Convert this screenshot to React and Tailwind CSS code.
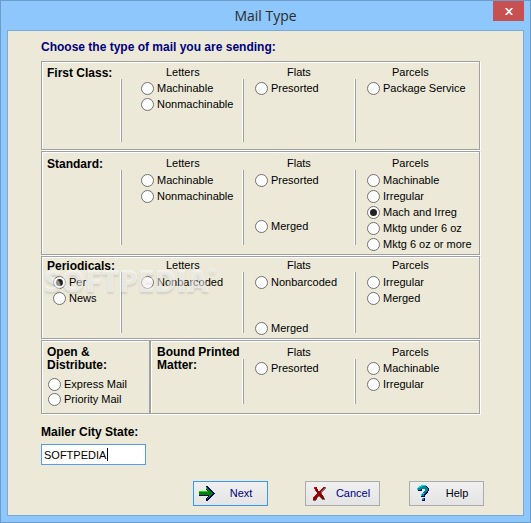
import { useState } from 'react';
import clsx from 'clsx';

function Radio({ label, name, checked, className }) {
  return (
    <label className={clsx('flex h-4 items-center gap-[3px] whitespace-nowrap', className)}>
      <input
        type="radio"
        name={name}
        defaultChecked={checked}
        className="relative m-0 size-[13px] shrink-0 appearance-none rounded-full border border-[#707070] bg-white before:absolute before:inset-[2px] before:hidden before:rounded-full before:bg-[#222] checked:before:block"
      />
      {label}
    </label>
  );
}

function Column({ title, name, options, titleClass, lineClass, bodyClass }) {
  return (
    <div className="flex flex-col">
      <div className={clsx('leading-[14px]', titleClass)}>{title}</div>
      <div className="flex flex-1">
        <div className={clsx('w-[2px] shrink-0 border-l border-white bg-[#a0a0a0]', lineClass)} />
        <div className={bodyClass}>
          {options.map((o) => (
            <Radio key={o.label} name={name} {...o} />
          ))}
        </div>
      </div>
    </div>
  );
}

const box = 'border border-[#a0a0a0] shadow-[1px_1px_0_#fff,inset_1px_1px_0_#fff]';
const heading = 'pl-[5px] text-[12px] font-bold';

const sections = [
  {
    title: 'First Class:',
    name: 'first-class',
    boxClass: 'min-h-[89px] pt-[3px]',
    lineClass: 'mb-[7px]',
    bodyClass: 'pt-px',
    letters: [{ label: 'Machinable' }, { label: 'Nonmachinable' }],
    flats: [{ label: 'Presorted' }],
    parcels: [{ label: 'Package Service' }],
  },
  {
    title: 'Standard:',
    name: 'standard',
    boxClass: 'min-h-[104px] pt-1',
    lineClass: 'mb-[9px]',
    bodyClass: 'pt-[2px]',
    letters: [{ label: 'Machinable' }, { label: 'Nonmachinable' }],
    flats: [{ label: 'Presorted' }, { label: 'Merged', className: 'mt-[30px]' }],
    parcels: [
      { label: 'Machinable' },
      { label: 'Irregular' },
      { label: 'Mach and Irreg', checked: true },
      { label: 'Mktg under 6 oz' },
      { label: 'Mktg 6 oz or more' },
    ],
  },
  {
    title: 'Periodicals:',
    name: 'periodicals',
    boxClass: 'min-h-[83px] pt-px',
    lineClass: 'mb-[5px]',
    bodyClass: 'pt-[2px]',
    own: [{ label: 'Per', checked: true }, { label: 'News' }],
    letters: [{ label: 'Nonbarcoded' }],
    flats: [{ label: 'Nonbarcoded' }, { label: 'Merged', className: 'mt-[30px]' }],
    parcels: [{ label: 'Irregular' }, { label: 'Merged' }],
  },
];

function Section({ title, name, boxClass, lineClass, bodyClass, own = [], letters, flats, parcels }) {
  return (
    <section
      className={clsx(
        'relative grid grid-cols-[minmax(0,78fr)_minmax(0,122fr)_minmax(0,112fr)_minmax(0,125fr)]',
        box,
        boxClass
      )}
    >
      <div>
        <h2 className={clsx(heading, 'leading-4')}>{title}</h2>
        <div className="pl-[11px]">
          {own.map((o) => (
            <Radio key={o.label} name={`${name}-type`} {...o} />
          ))}
        </div>
      </div>
      <Column title="Letters" name={name} options={letters} titleClass="pl-[46px]" lineClass={lineClass} bodyClass={clsx(bodyClass, 'pl-[19px]')} />
      <Column title="Flats" name={name} options={flats} titleClass="pl-[45px]" lineClass={lineClass} bodyClass={clsx(bodyClass, 'pl-[11px]')} />
      <Column title="Parcels" name={name} options={parcels} titleClass="pl-[38px]" lineClass={lineClass} bodyClass={clsx(bodyClass, 'pl-[11px]')} />
      {name === 'periodicals' && (
        <div
          aria-hidden="true"
          className="pointer-events-none absolute top-2 left-[2px] flex font-['Open_Sans',sans-serif] text-[30px] leading-8 font-extrabold text-white/50 [text-shadow:0_2px_2px_rgb(0_0_0/0.1)]"
        >
          SOFTPEDIA<span className="text-[9px] leading-3">®</span>
        </div>
      )}
    </section>
  );
}

function ArrowIcon() {
  return (
    <svg viewBox="0 0 17 16" className="h-4 w-[17px]" shapeRendering="crispEdges">
      <path d="M8 0h2v1h1v1h1v1h1v1h1v1h1v1h1v1h1v1h-1v1h-1v1h-1v1h-1v1h-1v1h-1v1h-1v1H8v-3h1v-1h1v-1H1V5h8V4H8z" fill="#000070" />
      <path d="M1 5h9V4H9V3H8V1h1v1h1v1h1v1h1v1h1v1h1v1h1v1h-1v1h-1v1h-1v1h-1v1h-1v1H9v-1h1v-1h1V9H1z" fill="#008000" />
      <path d="M1 5h9v1H1zM8 1h1v2H8z" fill="#00e000" />
    </svg>
  );
}

function CrossIcon() {
  return (
    <svg viewBox="0 0 14 15" className="h-[15px] w-[14px]" shapeRendering="crispEdges">
      <path d="M11 1h3v2h-1v1h-1v1h-1v1h-1v3h1v1h1v2h1v2h-3v-1H9v-1H8v-1H6v1H5v2H4v1H1v-2h3V9h4V5h2V3h1z" fill="#707070" />
      <path d="M2 1h3v2h1v2h2V4h1V3h1V2h1V1h2v1h-1v1h-1v1h-1v1h-1v1H9v2h1v1h1v2h1v2h-2v-1H9v-1H8v-1H6v1H5v2H4v1H1v-2h1v-1h1V9h1V8h1V6H4V5H3V3H2z" fill="#900000" />
      <path d="M2 1h2v1H2zM2 2h1v1H2zM3 3h1v2H3zM11 1h1v1h-1zM10 2h1v1h-1zM9 3h1v1H9zM8 4h1v1H8zM4 8h1v1H4zM3 9h1v1H3zM2 10h1v1H2zM1 11h1v2H1z" fill="#f00000" />
    </svg>
  );
}

function QuestionIcon() {
  return (
    <svg viewBox="0 0 12 17" className="h-[17px] w-3" shapeRendering="crispEdges">
      <path d="M4 1h6v1h1v1h1v3h-1v2h-1v1H9v1H8v2H4V9h1V8h2V7h1V4H5v2H1V3h2V2h1zM5 13h3v3H5z" fill="#000080" />
      <path d="M3 1h6v1h1v1h1v3h-1v1H9v1H8v1H7v2H4V9h1V8h1V7h1V6h1V4H4v1H1V3h1V2h1zM5 13h2v2H5z" fill="#008888" />
      <path d="M4 0h5v1H4zM2 1h3v1H2zM1 2h2v1H1zM0 3h1v2H0zM5 8h2v1H5zM4 9h1v2H4zM5 13h1v1H5z" fill="#00dddd" />
    </svg>
  );
}

function DialogButton({ icon, children, className }) {
  return (
    <button
      type="button"
      className={clsx('flex h-[25px] w-[75px] items-center border bg-linear-to-b from-[#f0f0f0] to-[#e4e4e4] pl-1', className)}
    >
      <span className="flex w-[17px] shrink-0 justify-center">{icon}</span>
      <span className="flex-1 text-center">{children}</span>
    </button>
  );
}

export default function App() {
  const [city, setCity] = useState('SOFTPEDIA');

  return (
    <div className="flex min-h-screen flex-col border border-[#6c9cc8] bg-[#8dc7fb] px-[6px] pb-[6px] font-['Liberation_Sans',Arial,sans-serif] text-[11px] text-black">
      <header className="relative flex h-[29px] items-center justify-center">
        <h1 className="font-['Open_Sans',sans-serif] text-[14px] text-[#2b2b2b]">Mail Type</h1>
        <button
          type="button"
          aria-label="Close"
          className="absolute top-0 right-0 flex h-5 w-[31px] items-center justify-center bg-[#c75050]"
        >
          <svg viewBox="0 0 8 7" className="h-[7px] w-2" fill="none" stroke="#fff" strokeWidth="1.7">
            <path d="M.7 0l6.6 7M7.3 0L.7 7" />
          </svg>
        </button>
      </header>

      <main className="flex-1 border border-[#78a9d8] bg-[#ece9d8]">
        <div className="pr-[43px] pl-[33px]">
          <p className="pt-2 pb-[6px] text-[12px] leading-4 font-bold text-[#000080]">
            Choose the type of mail you are sending:
          </p>

          <div className="flex flex-col gap-px">
            {sections.map((s) => (
              <Section key={s.name} {...s} />
            ))}

            <section
              className={clsx('grid min-h-[74px] grid-cols-[minmax(0,200fr)_minmax(0,112fr)_minmax(0,125fr)]', box)}
            >
              <div className="grid grid-cols-[109fr_91fr]">
                <div className="border-r-2 border-[#a0a0a0] pt-[5px]">
                  <h2 className={clsx(heading, 'leading-[13px]')}>
                    Open &amp;
                    <br />
                    Distribute:
                  </h2>
                  <div className="pt-1 pl-[6px]">
                    <Radio name="open-distribute" label="Express Mail" />
                    <Radio name="open-distribute" label="Priority Mail" className="-mt-px" />
                  </div>
                </div>
                <h2 className={clsx(heading, 'border-l border-white pt-[5px] leading-[13px] whitespace-nowrap')}>
                  Bound Printed
                  <br />
                  Matter:
                </h2>
              </div>
              <Column
                title="Flats"
                name="bound"
                options={[{ label: 'Presorted' }]}
                titleClass="pt-1 pl-[45px]"
                lineClass="mb-[9px]"
                bodyClass="pt-px pl-[11px]"
              />
              <Column
                title="Parcels"
                name="bound"
                options={[{ label: 'Machinable' }, { label: 'Irregular' }]}
                titleClass="pt-1 pl-[38px]"
                lineClass="mb-[9px]"
                bodyClass="pt-px pl-[11px]"
              />
            </section>
          </div>

          <label htmlFor="city" className="mt-[10px] block text-[12px] leading-4 font-bold">
            Mailer City State:
          </label>
          <div className="relative mt-1 w-[105px]">
            <input
              id="city"
              type="text"
              value={city}
              onChange={(e) => setCity(e.target.value)}
              className="block h-[21px] w-full border border-[#569de5] bg-white px-[2px] outline-none"
            />
            <span className="absolute top-1 left-[66px] h-[13px] w-px bg-black" />
          </div>
        </div>

        <div className="flex justify-end pt-4 pr-[39px] pb-[9px]">
          <DialogButton icon={<ArrowIcon />} className="mr-[37px] border-[#3399ff] text-[#000080]">Next</DialogButton>
          <DialogButton icon={<CrossIcon />} className="mr-[29px] border-[#acacac] text-[#000080]">Cancel</DialogButton>
          <DialogButton icon={<QuestionIcon />} className="border-[#acacac]">Help</DialogButton>
        </div>
      </main>
    </div>
  );
}
